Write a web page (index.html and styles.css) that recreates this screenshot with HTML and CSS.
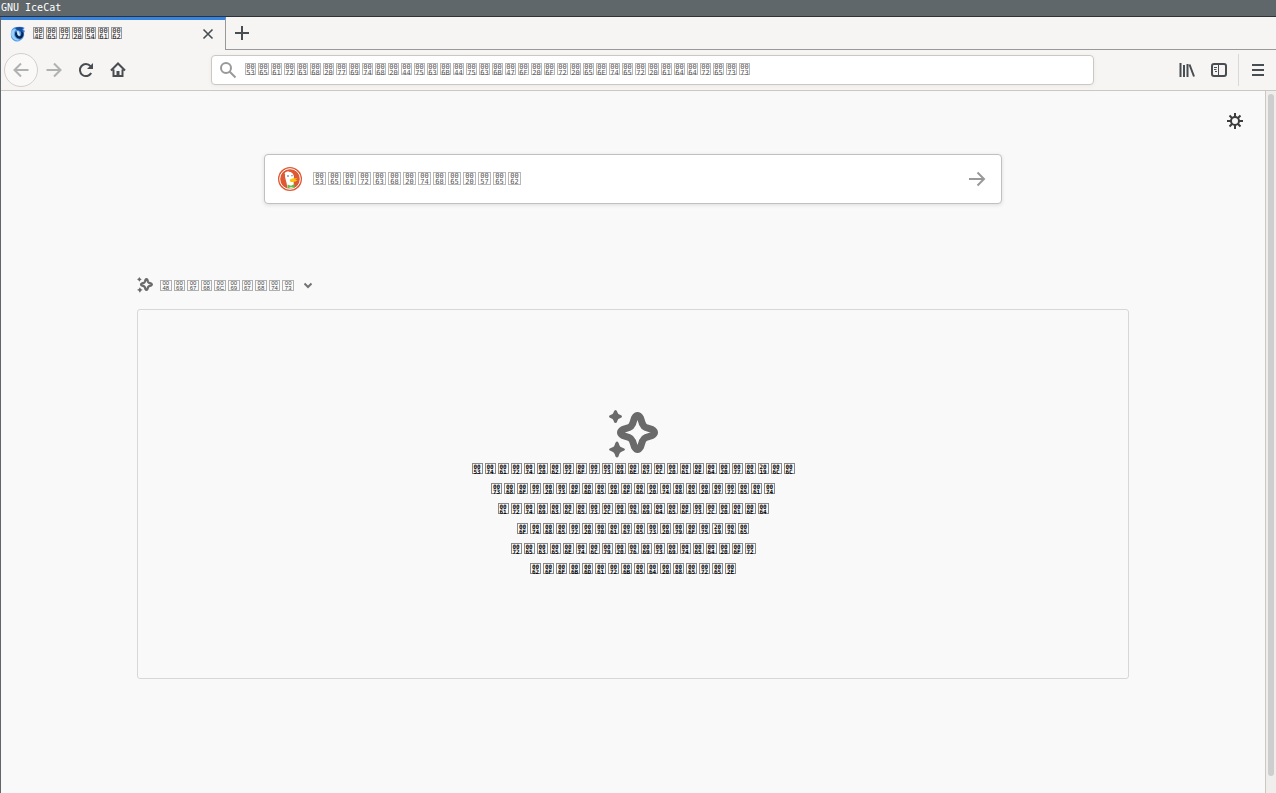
FILE: index.html
```html
<!DOCTYPE html>
<html lang="en">

<head>
  <meta charset="UTF-8">
  <meta name="viewport" content="width=device-width, initial-scale=1.0">
  <title>GNU IceCat</title>
  <link rel="stylesheet" href="styles.css">
</head>

<body>
  <div class="titlebar">GNU IceCat</div>

  <div class="window">
    <div class="tabs">
      <div class="tab active">
        <svg class="favicon" viewBox="0 0 16 16" width="16" height="16">
          <path d="M1 6Q2 1 7 1q4-1 8 1l-2 1 2 2-1 2q1 4-3 7-4 3-8 0-3-3-2-8z" fill="#4f9be6"/>
          <path d="M5 2q4-2 9 0l-2 1.500 2 2-3 .5Q9 4 7 4z" fill="#1a4c9c"/>
          <path d="M1.500 5Q0 9 3 12.500q3 3 7 1.500-5-1-6-5Q3.500 6 6 3 3 3 1.500 5z" fill="#9dd0f8"/>
          <path d="M6 5Q4 8 6 11q2 2.500 5 1.500 3-2 2.500-6L11 5.500q1 3-.5 4.500Q8 11 7.500 8.500z" fill="#0a2452"/>
          <path d="M7 5l2 .5 1 4q-2 .5-2.500-1z" fill="#d4ecff"/>
        </svg>
        <span class="hex tab-title">New Tab</span>
        <button class="close" aria-label="Close tab">
          <svg viewBox="0 0 12 12" width="12" height="12"><path d="M1.500 1.500l9 9M10.500 1.500l-9 9"/></svg>
        </button>
      </div>
      <div class="tabs-rest">
        <button class="new-tab" aria-label="Open a new tab">
          <svg viewBox="0 0 16 16" width="16" height="16"><path d="M8 1v14M1 8h14"/></svg>
        </button>
      </div>
    </div>

    <div class="toolbar">
      <button class="back" aria-label="Back" disabled>
        <svg viewBox="0 0 16 16" width="16" height="16"><path d="M15.500 8H1.500M8 1.500L1.500 8 8 14.500"/></svg>
      </button>
      <button class="tool forward" aria-label="Forward" disabled>
        <svg viewBox="0 0 16 16" width="16" height="16"><path d="M.5 8h14M8 1.500L14.500 8 8 14.500"/></svg>
      </button>
      <button class="tool" aria-label="Reload">
        <svg viewBox="0 0 16 16" width="16" height="16">
          <path d="M12.500 4.200A6 6 0 1 0 13.200 11"/>
          <path class="solid" d="M15 1v6H9z"/>
        </svg>
      </button>
      <button class="tool" aria-label="Home">
        <svg viewBox="0 0 16 16" width="16" height="16">
          <path d="M1 8.500L8 1.500l7 7M3.500 7.500V14h9V7.500"/>
          <path class="solid" d="M6.500 9h3v5h-3z"/>
        </svg>
      </button>
      <div class="urlbar">
        <svg viewBox="0 0 16 16" width="16" height="16"><circle cx="6" cy="6" r="5"/><path d="M9.500 9.500l6 6"/></svg>
        <div class="field">
          <input type="text" id="url">
          <label for="url" class="hex hint">Search with DuckDuckGo or enter address</label>
        </div>
      </div>
      <button class="tool" aria-label="Library">
        <svg viewBox="0 0 16 16" width="16" height="16"><path d="M1.500 1v14M5 3v12M8.500 2v13M10.500 2.500l4.500 12"/></svg>
      </button>
      <button class="tool" aria-label="Sidebars">
        <svg viewBox="0 0 16 16" width="16" height="16">
          <rect x="1" y="2" width="14" height="12" rx="2"/>
          <path class="thin" d="M7.500 2v12M3 5.500h3M3 7.500h2.500M4 9.500h2"/>
        </svg>
      </button>
      <div class="menu">
        <button class="tool" aria-label="Open menu">
          <svg viewBox="0 0 16 16" width="16" height="16"><path d="M2 3h12M2 8h12M2 13h12"/></svg>
        </button>
      </div>
    </div>

    <div class="view">
      <main class="page">
        <div class="prefs">
          <button aria-label="Customize your New Tab page">
            <svg viewBox="0 0 16 16" width="16" height="16">
              <circle cx="8" cy="8" r="4"/>
              <path d="M8 0v4M8 12v4M0 8h4M12 8h4M2.500 2.500l2.500 2.500M11 11l2.500 2.500M13.500 2.500L11 5M5 11l-2.500 2.500"/>
            </svg>
          </button>
        </div>

        <form class="search">
          <svg class="duck" viewBox="0 0 24 24" width="24" height="24">
            <circle cx="12" cy="12" r="12" fill="#de5833"/>
            <circle cx="12" cy="12" r="10.300" fill="none" stroke="#fff" stroke-width="1"/>
            <path d="M9.500 21Q8.500 15 7.500 12 5.500 5.500 10 4.800q5-.3 6 4.700l-.5 4 .5 7q-3 1.500-6.500.5z" fill="#fff"/>
            <path d="M6.500 6.500q1-2.500 4-2l1 1-4 2z" fill="#fff"/>
            <path d="M12 12.500q3-2 7.500-1l-2.500 1.500h2.500q-1.500 2.500-6.500 2-2-1-1-2.500z" fill="#fdc30a"/>
            <path d="M9.500 17.500l3.500 1.200 3.500-1.700v4l-3.500-.8-3.500 1z" fill="#65bc46"/>
            <circle cx="10" cy="9" r=".8" fill="#2d4f8e"/>
            <circle cx="14" cy="8.700" r=".6" fill="#2d4f8e"/>
          </svg>
          <div class="field">
            <input type="text" id="search">
            <label for="search" class="hex hint large">Search the Web</label>
          </div>
          <button type="button" aria-label="Search">
            <svg viewBox="0 0 16 16" width="16" height="16"><path d="M0 8h14.500M8.500 1.500L15 8l-6.500 6.500"/></svg>
          </button>
        </form>

        <section class="highlights">
          <button class="section-title" aria-expanded="true">
            <svg class="sparkle" viewBox="0 0 50 48" width="16" height="16"><use href="#sparkle"/></svg>
            <span class="hex heading">Highlights</span>
            <svg class="caret" viewBox="0 0 10 6" width="10" height="6"><path d="M1.500 1.500L5 5 8.500 1.500"/></svg>
          </button>
          <div class="empty">
            <svg class="sparkle" viewBox="0 0 50 48" width="50" height="48">
              <g id="sparkle">
                <path class="star" d="M26.500 8Q29.500 3 32.500 8L34.500 14Q35.500 16.500 38 17.500L44 19.500Q49 22.500 44 25.500L38 27.500Q35.500 28.500 34.500 31L32.500 37Q29.500 42 26.500 37L24.500 31Q23.500 28.500 21 27.500L15 25.500Q10 22.500 15 19.500L21 17.500Q23.500 16.500 24.500 14Z"/>
                <path d="M7.500 0Q9 0 9.500 2.500 10 4.300 12 4.800 14 5.500 14 6.500T12 8.200Q10 8.700 9.500 10.500 9 13 7.500 13T5.500 10.500Q5 8.700 3 8.200 1 7.500 1 6.500T3 4.800Q5 4.300 5.500 2.500 6 0 7.500 0z"/>
                <path d="M9 31.500Q10.500 31.500 11.300 35 12 37 14 37.500 17 38.500 17 39.500T14 41.500Q12 42 11.300 44 10.500 47.500 9 47.500T6.700 44Q6 42 4 41.500 1 40.500 1 39.500T4 37.500Q6 37 6.700 35 7.500 31.500 9 31.500z"/>
              </g>
            </svg>
            <p>
              <span class="hex dark">Start browsing, and we’ll</span>
              <span class="hex dark">show some of the great</span>
              <span class="hex dark">articles, videos, and</span>
              <span class="hex dark">other pages you’ve</span>
              <span class="hex dark">recently visited or</span>
              <span class="hex dark">bookmarked here.</span>
            </p>
          </div>
        </section>
      </main>
      <div class="scrollbar"><div class="thumb"></div></div>
    </div>
  </div>

  <script>
    // show every character as a box with its code point, two digits a row
    const list = document.querySelectorAll('.hex')

    for (let i = 0; i < list.length; i++) {
      const text = list[i].textContent
      list[i].textContent = ''
      for (const char of text) {
        const code = char.codePointAt(0).toString(16).toUpperCase().padStart(4, '0')
        const box = document.createElement('span')
        box.className = 'box'
        box.textContent = code.slice(0, 2) + '\n' + code.slice(2)
        list[i].appendChild(box)
      }
    }
  </script>
</body>

</html>
```
FILE: styles.css
```css
* {
  box-sizing: border-box;
  margin: 0;
  padding: 0;
}

body {
  display: flex;
  flex-direction: column;
  min-height: 100vh;
  background-color: #f9f9f9;
  font-family: "DejaVu Sans Mono", monospace;
}

button {
  display: flex;
  align-items: center;
  justify-content: center;
  border: none;
  background: none;
}

input {
  border: none;
  outline: none;
  background: none;
}

svg {
  display: block;
  flex: none;
  overflow: visible;
  fill: none;
  stroke: #474d50;
  stroke-width: 2;
}

.titlebar {
  height: 17px;
  padding-left: 1px;
  border-bottom: 1px solid #2e3436;
  background-color: #5f676a;
  color: #fff;
  font-size: 10px;
  line-height: 15px;
}

.window {
  flex: 1;
  display: flex;
  flex-direction: column;
  border-left: 1px solid #5f676a;
}

/* code point boxes */
.hex {
  display: flex;
  gap: 2px;
  color: #222;
}

.hex .box {
  display: flex;
  justify-content: center;
  width: 11px;
  height: 12px;
  border: 1px solid #999;
  font-size: 7px;
  line-height: 6px;
  white-space: pre;
}

.hex.hint {
  margin-bottom: 2px;
  color: #555;
}

.hex.hint .box {
  border-color: #b8b8b8;
}

.hex.large {
  margin-left: 2px;
}

.hex.large .box {
  width: 13px;
  height: 13px;
}

.hex.heading {
  justify-content: space-between;
  width: 134px;
  color: #444;
}

.hex.heading .box {
  width: 12px;
  height: 11px;
  border-color: #b0b0b0;
  font-size: 6px;
  line-height: 5px;
}

.hex.dark {
  justify-content: center;
  align-items: center;
  height: 20px;
  color: #000;
}

.hex.dark .box {
  height: 11px;
  border-color: #888;
  font-size: 6px;
  font-weight: bold;
  line-height: 5px;
}

/* tabs */
.tabs {
  display: flex;
  height: 33px;
  background-color: #f6f5f4;
}

.tab {
  display: flex;
  align-items: center;
  width: 225px;
  padding: 0 11px 2px 9px;
  border-top: 3px solid #3584e4;
  border-right: 1px solid #999;
}

.tab .close svg {
  stroke-width: 1.6;
}

.tab-title {
  flex: 1;
  margin-bottom: 2px;
  margin-left: 7px;
}

.favicon {
  stroke: none;
}

.tabs-rest {
  flex: 1;
  display: flex;
  padding-left: 8px;
  border-bottom: 1px solid #999;
}

/* toolbar */
.toolbar {
  display: flex;
  align-items: center;
  height: 41px;
  padding: 0 2px 0 3px;
  border-bottom: 1px solid #cdc7c2;
  background-color: #f6f5f4;
}

.tool {
  width: 32px;
  height: 32px;
}

.back {
  width: 34px;
  height: 34px;
  border: 1px solid #d3cfcb;
  border-radius: 50%;
  background-color: #faf9f8;
}

.back svg,
.forward svg {
  stroke: #b0b2b2;
}

.toolbar .solid {
  fill: #474d50;
  stroke: none;
}

.toolbar .thin {
  stroke-width: 1;
}

.urlbar {
  flex: 1;
  display: flex;
  align-items: center;
  height: 30px;
  margin: 0 77px;
  padding-left: 8px;
  border: 1px solid #cdc7c2;
  border-radius: 4px;
  background-color: #fff;
  box-shadow: 0 1px 4px rgba(0, 0, 0, .05);
}

.urlbar svg {
  stroke: #999;
}

/* the hint shares one cell with its input */
.field {
  flex: 1;
  display: grid;
  align-items: center;
  margin-left: 9px;
}

.field > * {
  grid-area: 1 / 1;
}

.menu {
  margin-left: 3px;
  padding-left: 3px;
  border-left: 1px solid #dad8d5;
}

/* new tab page */
.view {
  flex: 1;
  display: flex;
}

.page {
  flex: 1;
}

.prefs {
  display: flex;
  justify-content: flex-end;
  padding: 22px 22px 25px;
}

.prefs svg {
  stroke: #3d3d3d;
}

.search {
  display: flex;
  align-items: center;
  max-width: 738px;
  height: 50px;
  margin: 0 auto 73px;
  padding: 0 16px 0 13px;
  border: 1px solid #c0c0c0;
  border-radius: 4px;
  background-color: #fff;
  box-shadow: 0 1px 4px rgba(0, 0, 0, .12);
}

.search button svg {
  stroke: #999;
}

.duck {
  stroke: none;
}

.highlights {
  max-width: 992px;
  margin: 0 auto;
}

.section-title {
  gap: 7px;
  height: 16px;
  margin-bottom: 16px;
}

.section-title .caret {
  margin-left: 2px;
  stroke: #737373;
}

.sparkle {
  fill: #6a6a6a;
  stroke: none;
}

.star {
  stroke: #6a6a6a;
  stroke-width: 7;
  fill: none;
}

.empty {
  display: flex;
  flex-direction: column;
  align-items: center;
  padding: 100px 20px;
  border: 1px solid #d7d7d7;
  border-radius: 3px;
}

/* scrollbar */
.scrollbar {
  display: flex;
  width: 11px;
  padding: 3px 2px 17px;
  border-left: 1px solid #cdc7c2;
  background-color: #efeeed;
}

.thumb {
  flex: 1;
  border-radius: 3px;
  background-color: #cecece;
}
```
